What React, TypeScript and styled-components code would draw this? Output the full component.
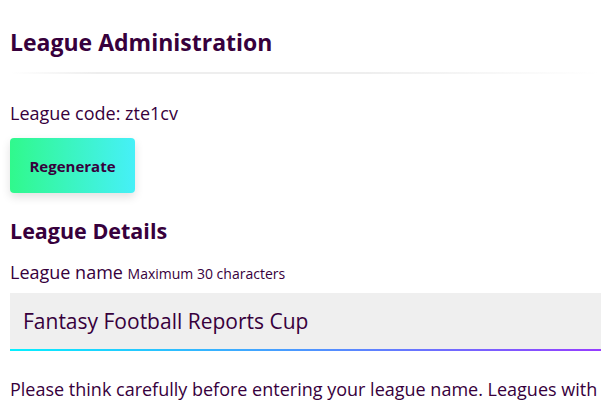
import styled, { createGlobalStyle } from "styled-components";

const GlobalStyle = createGlobalStyle`
  body {
    margin: 0;
    background: #fff;
    font-family: "Open Sans", "Noto Sans", sans-serif;
    color: #37003c;
  }
`;

export default function App() {
  return (
    <>
      <GlobalStyle />
      <Page>
        <Heading>League Administration</Heading>
        <Divider />
        <Code>League code: zte1cv</Code>
        <Button type="button">Regenerate</Button>
        <SubHeading>League Details</SubHeading>
        <Label>
          League name <Hint>Maximum 30 characters</Hint>
        </Label>
        <Field>
          <Input defaultValue="Fantasy Football Reports Cup" />
        </Field>
        <Note>
          Please think carefully before entering your league name. Leagues with
          names deemed offensive or inappropriate will be removed.
        </Note>
      </Page>
    </>
  );
}

const Page = styled.div`
  padding: 0 11px 0 10px;
  display: flex;
  flex-direction: column;
  align-items: flex-start;
`;

const Heading = styled.h2`
  margin: 29px 0 0;
  font-size: 23px;
  line-height: 26px;
  font-weight: 700;
`;

const Divider = styled.div`
  align-self: stretch;
  height: 2px;
  margin: 17px 0 0;
  background: linear-gradient(
    to right,
    rgba(235, 235, 235, 0),
    #eeeeee 15%,
    #eeeeee 60%,
    rgba(235, 235, 235, 0)
  );
`;

const Code = styled.p`
  margin: 29px 0 0;
  font-size: 18px;
  line-height: 20px;
`;

const Button = styled.button`
  margin-top: 15px;
  width: 125px;
  height: 55px;
  border: none;
  border-radius: 4px;
  background: linear-gradient(to right, #30f98c, #46f0f8);
  box-shadow: 0 4px 10px rgba(0, 0, 0, 0.12);
  font-family: inherit;
  font-size: 15px;
  font-weight: 700;
  color: #37003c;
  cursor: pointer;
`;

const SubHeading = styled.h3`
  margin: 26px 0 0;
  font-size: 21.5px;
  line-height: 24px;
  font-weight: 700;
`;

const Label = styled.label`
  margin-top: 19px;
  font-size: 18px;
  line-height: 20px;
`;

const Hint = styled.span`
  font-size: 14px;
`;

const Field = styled.div`
  align-self: stretch;
  margin-top: 9px;
  padding-bottom: 2px;
  background: linear-gradient(to right, #05f0ff, #963cff);
`;

const Input = styled.input`
  display: block;
  box-sizing: border-box;
  width: 100%;
  height: 56px;
  padding: 0 13px;
  border: none;
  outline: none;
  background: #efefef;
  font-family: inherit;
  font-size: 21px;
  color: #37003c;
`;

const Note = styled.p`
  margin: 22px 0 0;
  font-size: 18px;
  line-height: 32px;
`;
